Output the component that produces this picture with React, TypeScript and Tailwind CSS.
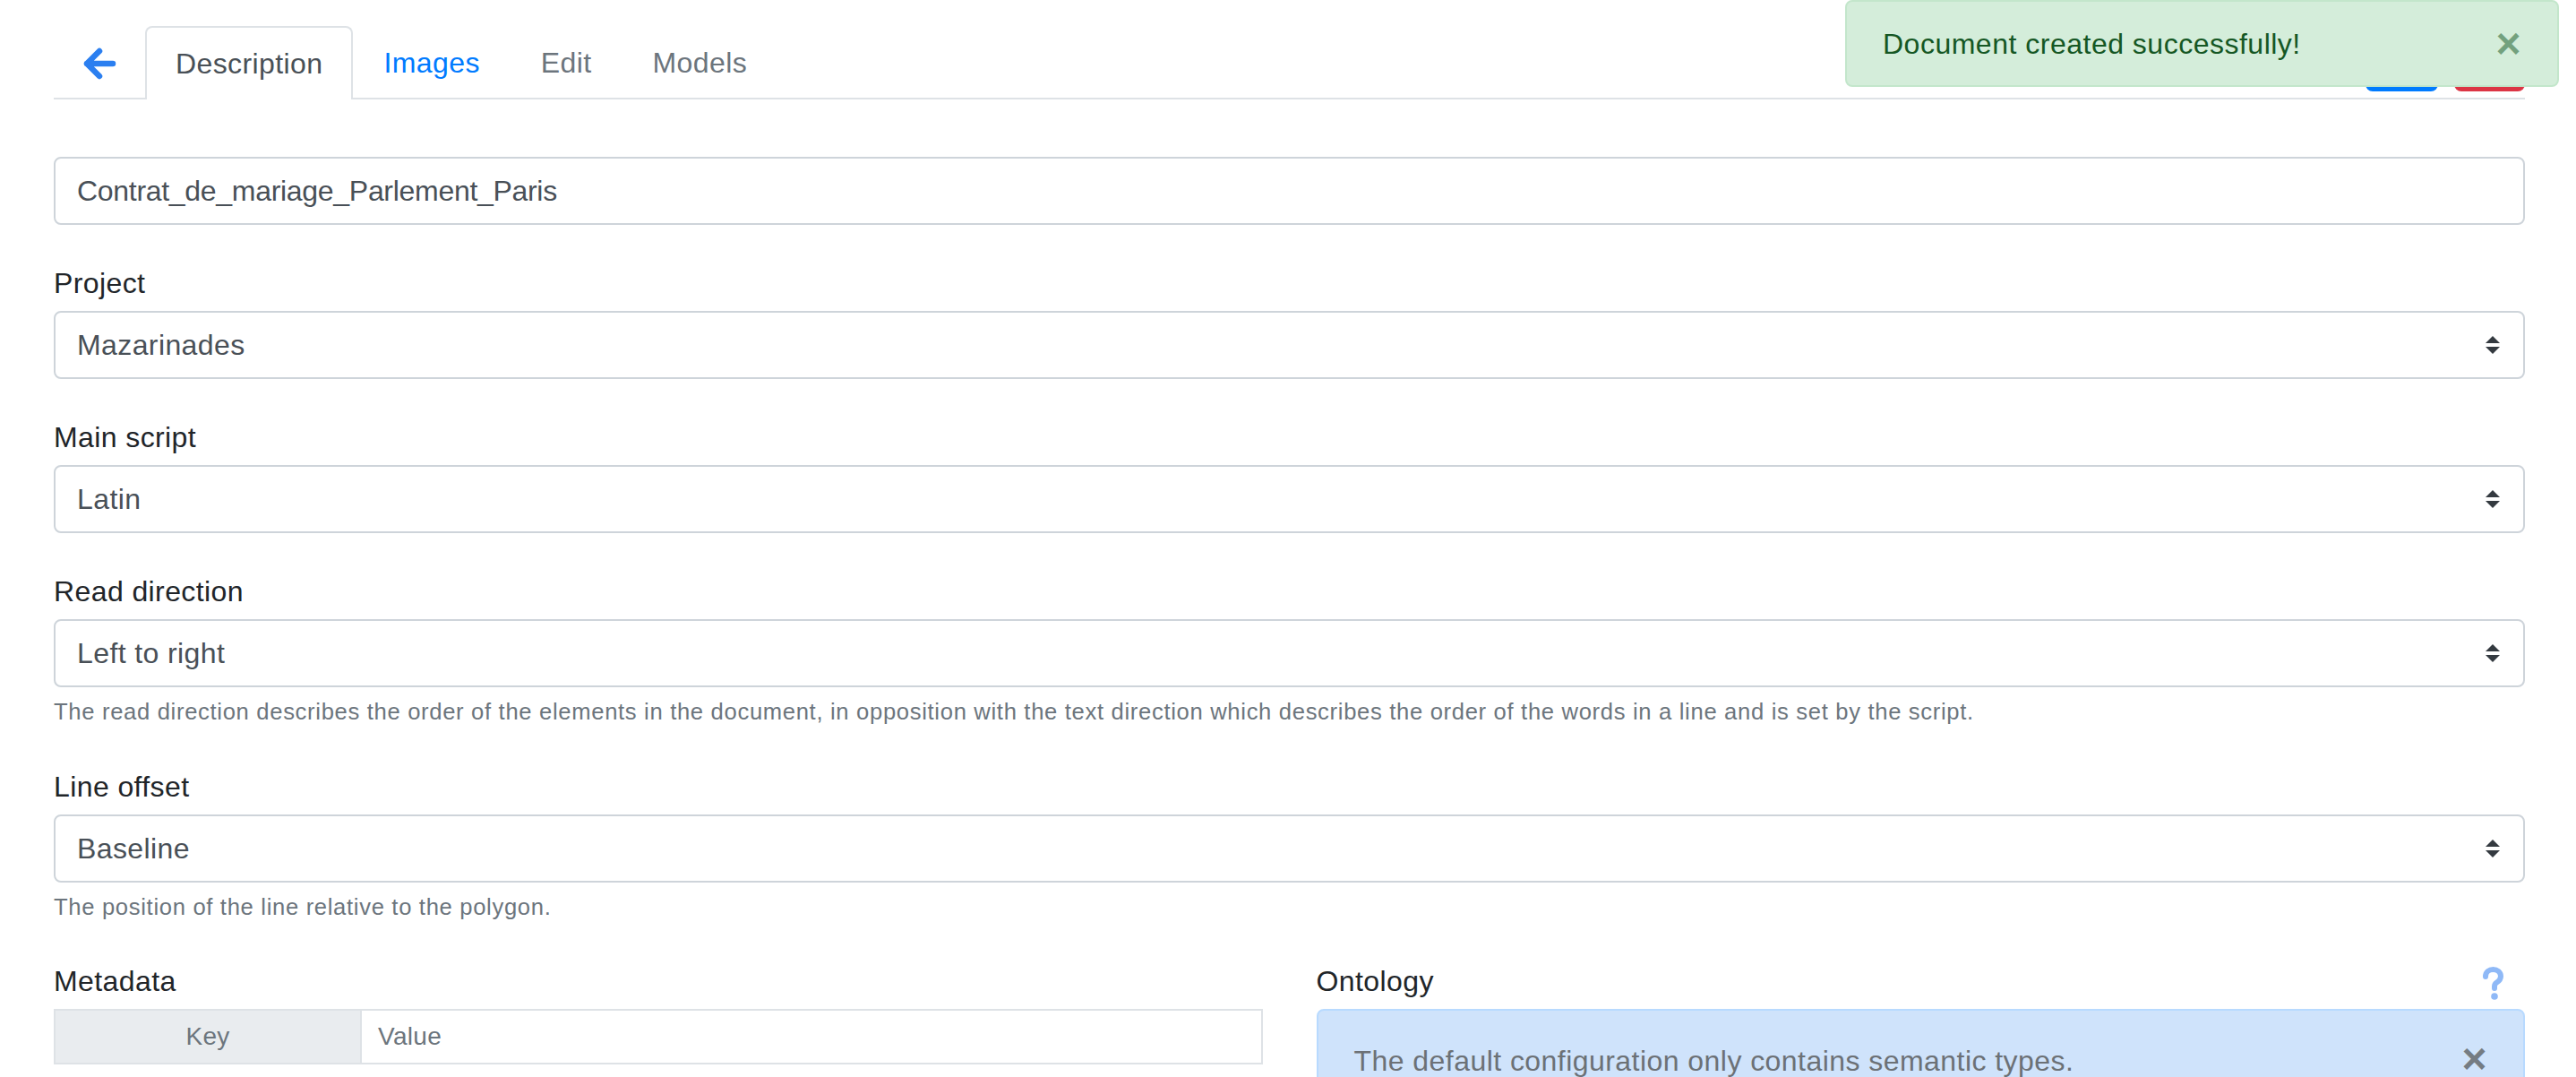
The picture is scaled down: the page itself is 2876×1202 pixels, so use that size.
import React from "react";

const font = { fontFamily: '"Liberation Sans", Arial, sans-serif' };

function SelectArrow() {
  return (
    <svg width="16" height="20" viewBox="0 0 4 5" className="absolute right-[26px] top-1/2 -translate-y-1/2">
      <path d="M2 0L0 2h4zm0 5L0 3h4z" fill="#343a40" />
    </svg>
  );
}

function Select({ value }: { value: string }) {
  return (
    <div className="relative h-[76px] w-full rounded-[8px] border-2 border-[#ced4da] bg-white pl-[24px] flex items-center text-[32px] tracking-[0.4px] text-[#495057]">
      <span>{value}</span>
      <SelectArrow />
    </div>
  );
}

function Label({ children }: { children: React.ReactNode }) {
  return <div className="text-[32px] leading-[48px] tracking-[0.4px] text-[#212529] mb-[7px]">{children}</div>;
}

function Help({ children }: { children: React.ReactNode }) {
  return <div className="mt-[8px] text-[25.6px] leading-[38px] tracking-[0.68px] text-[#6c757d]">{children}</div>;
}

export default function App() {
  return (
    <div className="relative min-h-[1202px] bg-white" style={font}>
      {/* Toast */}
      <div className="fixed top-0 right-[19px] z-10 w-[797px] h-[97px] rounded-[8px] border-2 border-[#c3e6cb] bg-[#d4edda] pl-[40px] flex items-center text-[32px] tracking-[0.5px] text-[#155724]">
        <span>Document created successfully!</span>
        <span className="absolute right-[40px] top-1/2 -translate-y-1/2 text-[48px] font-bold leading-none text-[#155724] opacity-50">×</span>
      </div>

      <div className="pl-[60px] pr-[57px] pt-[29px]">
        {/* Tabs */}
        <div className="flex items-end border-b-2 border-[#dee2e6] h-[82px]">
          <div className="h-[80px] flex items-center px-[32px] -mb-[2px]">
            <svg width="38" height="36" viewBox="0 0 38 36" fill="none">
              <path d="M19 4L5 18L19 32M5 18H34" stroke="#2b7ff0" strokeWidth="6.5" strokeLinecap="round" strokeLinejoin="round" />
            </svg>
          </div>
          <div className="h-[82px] -mb-[2px] flex items-center px-[32px] border-2 border-b-0 border-[#dee2e6] rounded-t-[8px] bg-white text-[32px] tracking-[0.4px] text-[#495057]">
            Description
          </div>
          <div className="h-[82px] -mb-[2px] flex items-center px-[32px] border-2 border-transparent text-[32px] tracking-[0.4px] text-[#007bff]">Images</div>
          <div className="h-[82px] -mb-[2px] flex items-center px-[32px] border-2 border-transparent text-[32px] tracking-[0.4px] text-[#6c757d]">Edit</div>
          <div className="h-[82px] -mb-[2px] flex items-center px-[32px] border-2 border-transparent text-[32px] tracking-[0.4px] text-[#6c757d]">Models</div>
          <div className="ml-auto flex gap-[18px] mb-[7px]">
            <div className="w-[81px] h-[62px] rounded-[8px] bg-[#007bff]" />
            <div className="w-[79px] h-[62px] rounded-[8px] bg-[#dc3545]" />
          </div>
        </div>

        {/* Name input */}
        <div className="mt-[64px] h-[76px] w-full rounded-[8px] border-2 border-[#ced4da] pl-[24px] flex items-center text-[32px] tracking-[-0.3px] text-[#495057]">
          Contrat_de_mariage_Parlement_Paris
        </div>

        <div className="mt-[41px]">
          <Label>Project</Label>
          <Select value="Mazarinades" />
        </div>

        <div className="mt-[41px]">
          <Label>Main script</Label>
          <Select value="Latin" />
        </div>

        <div className="mt-[41px]">
          <Label>Read direction</Label>
          <Select value="Left to right" />
          <Help>
            The read direction describes the order of the elements in the document, in opposition with the text direction which describes the order of the words in a line and is set by the script.
          </Help>
        </div>

        <div className="mt-[41px]">
          <Label>Line offset</Label>
          <Select value="Baseline" />
          <Help>The position of the line relative to the polygon.</Help>
        </div>

        <div className="mt-[40px] grid grid-cols-2 gap-[60px]">
          <div>
            <Label>Metadata</Label>
            <div className="flex h-[62px] border-2 border-[#dee2e6] text-[28px] tracking-[0.3px]">
              <div className="w-[342px] bg-[#e9ecef] border-r-2 border-[#dee2e6] flex items-center justify-center text-[#6c757d]">Key</div>
              <div className="flex-1 flex items-center pl-[18px] text-[#6c757d]">Value</div>
            </div>
          </div>
          <div>
            <div className="flex items-start justify-between">
              <Label>Ontology</Label>
              <svg width="24" height="38" viewBox="0 0 24 38" className="mr-[24px] mt-[8px]">
                <path d="M4 11C4 6 8 3 12.5 3C17 3 21 6 21 10.5C21 14 19 16 16.5 17.5C14.5 18.7 14 19.8 14 22V24" stroke="#8fb9f7" strokeWidth="6" fill="none" strokeLinecap="round" />
                <circle cx="14" cy="33" r="3.8" fill="#8fb9f7" />
              </svg>
            </div>
            <div className="relative rounded-[8px] border-2 border-[#b8daff] bg-[#cfe3fb] pl-[40px] pr-[90px] pt-[32px] pb-[32px] text-[32px] leading-[48px] tracking-[0.45px] text-[#6c7176]">
              The default configuration only contains semantic types.
              <span className="absolute right-[40px] top-[30px] text-[48px] font-bold leading-[48px] text-[#5f6366] opacity-80">×</span>
              <div className="h-[60px]" />
            </div>
          </div>
        </div>
      </div>
    </div>
  );
}
